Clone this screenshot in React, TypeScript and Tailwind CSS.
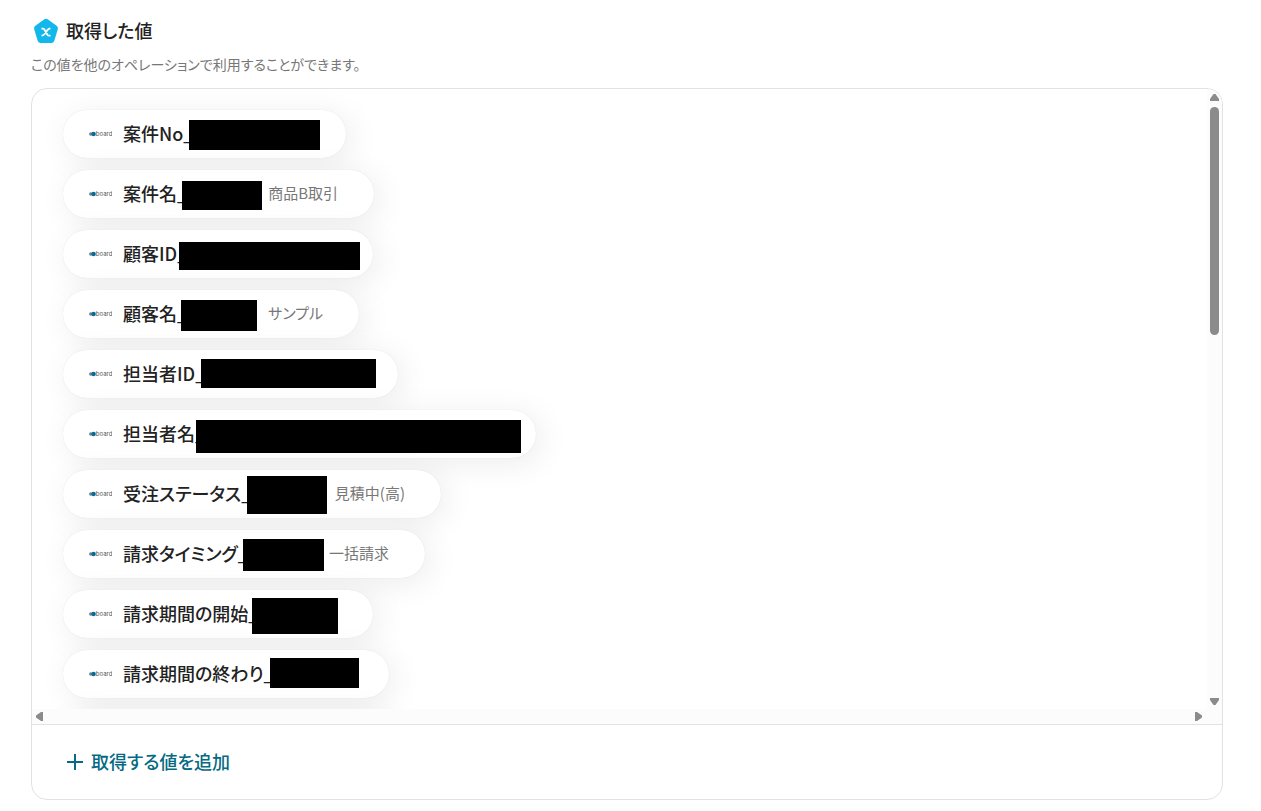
import { useState } from 'react';

type Item = {
  label: string;
  value?: string;
  size: string;
  mask?: string;
};

const initialItems: Item[] = [
  { label: '案件No_', size: 'w-[283px]', mask: 'left-[126px] top-[10px] w-[131px] h-[30px]' },
  { label: '案件名_', value: '商品B取引', size: 'w-[311px]', mask: 'left-[119px] top-[11px] w-[80px] h-[29px]' },
  { label: '顧客ID_', size: 'w-[310px]', mask: 'left-[116px] top-[12px] w-[181px] h-[28px]' },
  { label: '顧客名_', value: 'サンプル', size: 'w-[296px]', mask: 'left-[118px] top-[10px] w-[76px] h-[31px]' },
  { label: '担当者ID_', size: 'w-[335px]', mask: 'left-[138px] top-[9px] w-[175px] h-[29px]' },
  { label: '担当者名_', size: 'w-[473px]', mask: 'left-[133px] top-[10px] w-[325px] h-[33px]' },
  { label: '受注ステータス_', value: '見積中(高)', size: 'w-[378px]', mask: 'left-[184px] top-[6px] w-[80px] h-[38px]' },
  { label: '請求タイミング_', value: '一括請求', size: 'w-[362px]', mask: 'left-[180px] top-[9px] w-[81px] h-[32px]' },
  { label: '請求期間の開始_', size: 'w-[310px]', mask: 'left-[189px] top-[8px] w-[86px] h-[36px]' },
  { label: '請求期間の終わり_', size: 'w-[326px]', mask: 'left-[207px] top-[8px] w-[89px] h-[30px]' },
  { label: '', size: 'w-[326px]' },
];

function VariableIcon() {
  return (
    <svg viewBox="0 0 26 26" className="w-[26px] h-[26px] shrink-0">
      <path
        d="M11 1.6a3.4 3.4 0 0 1 4 0l8.6 6.1a3.2 3.2 0 0 1 1.2 3.6l-3.4 11.2A3 3 0 0 1 18.6 24.9H7.4a3 3 0 0 1-2.8-2.4L1.2 11.3a3.2 3.2 0 0 1 1.2-3.6z"
        fill="#12b8ec"
      />
      <path
        d="M8.4 10.7h1.4c.8 0 1.3.3 1.7 1l2.9 5c.4.700.9 1 1.700 1h1.400M17.400 10.500c-1.500 0-2.100.5-2.800 1.400l-3.200 4.400c-.7.900-1.400 1.400-2.900 1.400"
        fill="none"
        stroke="#fff"
        strokeWidth="1.8"
      />
    </svg>
  );
}

function BoardLogo() {
  return (
    <svg viewBox="0 0 24 8" className="w-6 h-2 shrink-0">
      <circle cx="2.8" cy="4" r="1.8" fill="#6d8592" />
      <circle cx="5.6" cy="4" r="2.2" fill="#0b6a9c" />
      <text x="7.8" y="5.8" fontSize="6" fill="#555" fontFamily="Inter, sans-serif">board</text>
    </svg>
  );
}

function Chip({ item }: { item: Item }) {
  return (
    <li className={`relative flex items-center h-12 max-w-full pl-[25px] pr-9 rounded-full bg-white shadow-[5px_5px_32px_rgba(0,0,0,0.08),0_0_1px_rgba(0,0,0,0.12)] whitespace-nowrap ${item.size}`}>
      {item.label && <BoardLogo />}
      <span className="ml-[11px] pb-[2px] text-[18px] leading-6 font-medium text-[#222]">{item.label}</span>
      {item.value && <span className="ml-auto pb-[2px] text-[15px] leading-6 text-[#777]">{item.value}</span>}
      {item.mask && <span className={`absolute bg-black ${item.mask}`} />}
    </li>
  );
}

export default function App() {
  const [items, setItems] = useState<Item[]>(initialItems);

  const handleAdd = () => {
    setItems([...items, { label: '', size: 'w-[326px]' }]);
  };

  return (
    <main className="bg-white pl-[31px] pr-[38px] pt-[17px] pb-[11px] [font-family:'Noto_Sans_CJK_JP',sans-serif] [font-feature-settings:'palt']">
      <div className="flex items-center gap-[7px] pl-[2px] h-7">
        <VariableIcon />
        <h2 className="pb-[2px] text-[18px] leading-6 font-medium text-[#222]">取得した値</h2>
      </div>
      <p className="mt-[7px] h-6 text-[14px] leading-6 text-[#777]">この値を他のオペレーションで利用することができます。</p>

      <section className="mt-3 border border-[#e2e2e2] rounded-[16px] overflow-hidden">
        <div className="flex h-[620px]">
          <ul className="flex-1 min-w-0 flex flex-col gap-3 overflow-hidden pl-[31px] pt-[21px] *:shrink-0">
            {items.map((item, i) => (
              <Chip key={i} item={item} />
            ))}
          </ul>
          <div className="flex flex-col items-center w-[15px] bg-[#fcfcfc] pt-[5px] pb-1">
            <svg viewBox="0 0 9 7" className="w-[9px] h-[7px]"><path d="M3.5 0h2L9 5V7H0V5z" fill="#8b8b8b" /></svg>
            <div className="mt-[6px] w-[9px] h-[228px] rounded-full bg-[#8b8b8b]" />
            <svg viewBox="0 0 9 7" className="mt-auto w-[9px] h-[7px]"><path d="M3.5 7h2L9 2V0H0V2z" fill="#8b8b8b" /></svg>
          </div>
        </div>
        <div className="flex items-center justify-between h-[15px] bg-[#fcfcfc] pl-1 pr-5">
          <svg viewBox="0 0 7 9" className="w-[7px] h-[9px]"><path d="M0 3.5v2L5 9H7V0H5z" fill="#8b8b8b" /></svg>
          <svg viewBox="0 0 7 9" className="w-[7px] h-[9px]"><path d="M7 3.5v2L2 9H0V0H2z" fill="#8b8b8b" /></svg>
        </div>
        <div className="flex items-center h-[75px] border-t border-[#e2e2e2] pl-[35px]">
          <button type="button" onClick={handleAdd} className="flex items-center gap-2 text-[18px] leading-6 font-medium text-[#066a83] cursor-pointer">
            <svg viewBox="0 0 16 16" className="w-4 h-4"><path d="M8 0v16M0 8h16" stroke="currentColor" strokeWidth="2" /></svg>
            <span className="pb-[2px]">取得する値を追加</span>
          </button>
        </div>
      </section>
    </main>
  );
}
